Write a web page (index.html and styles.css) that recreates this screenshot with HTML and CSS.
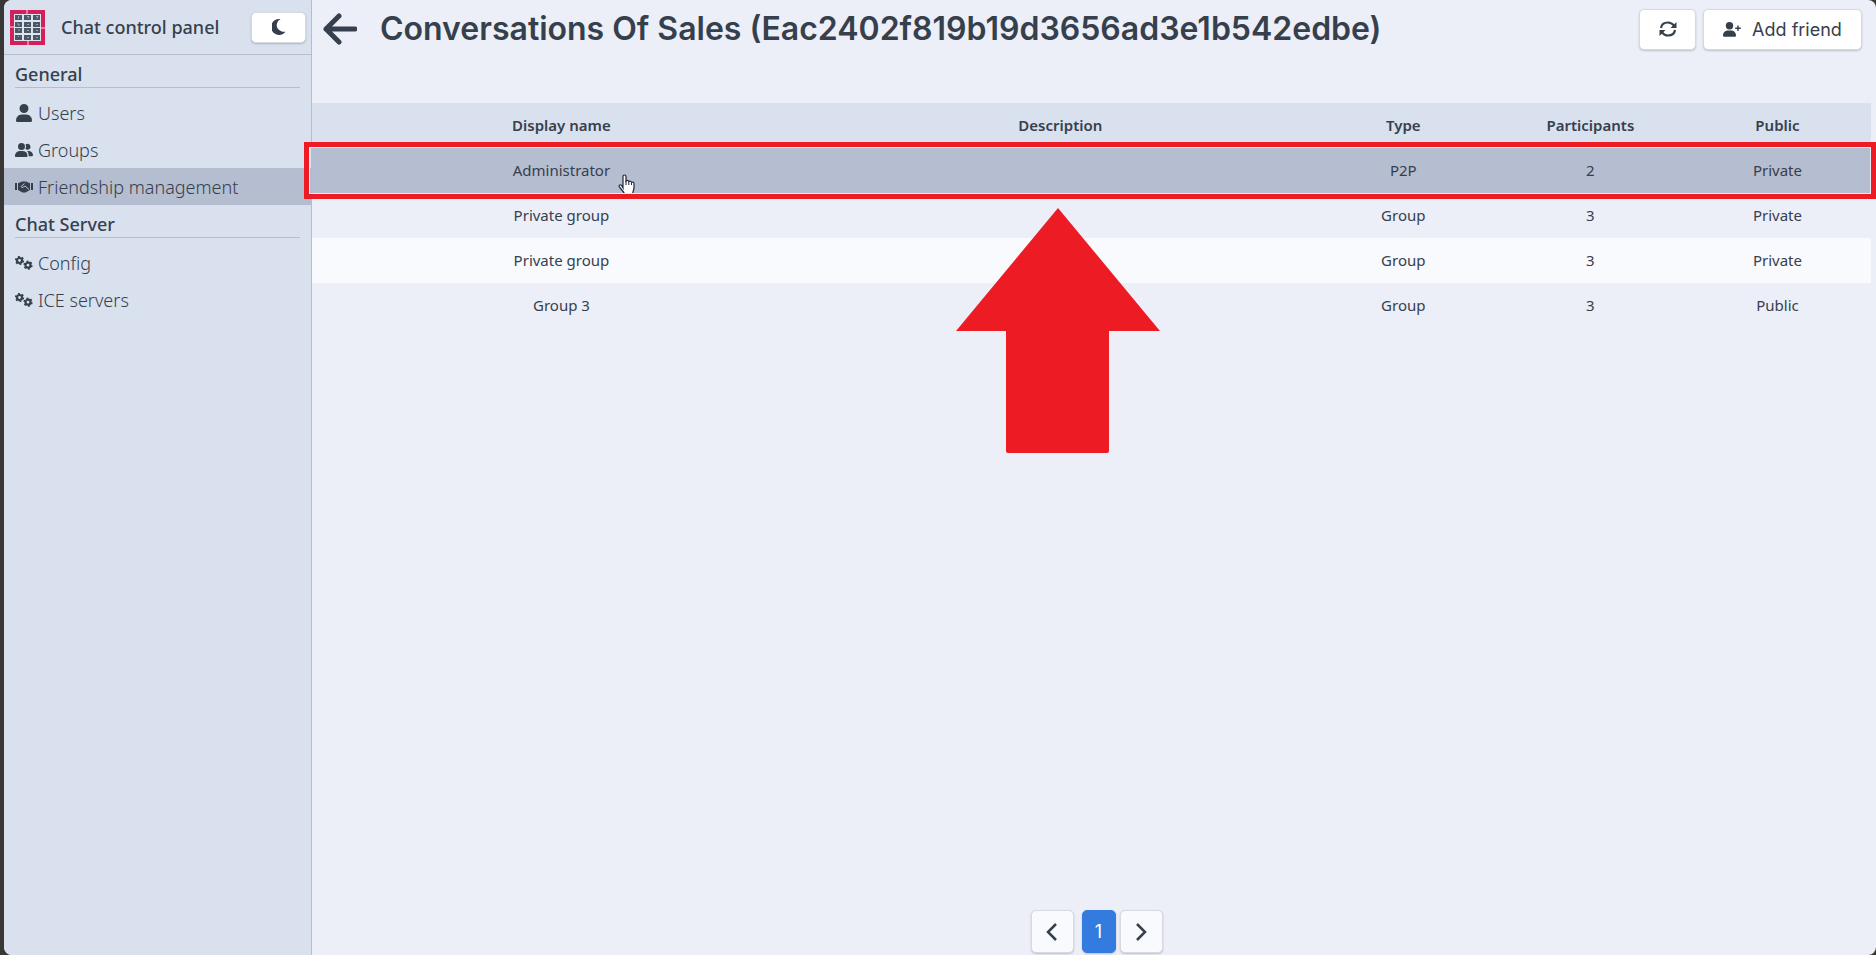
FILE: index.html
```
<!DOCTYPE html>
<html lang="en">
<head>
<meta charset="UTF-8">
<title>Chat control panel</title>
<link rel="stylesheet" href="styles.css">
</head>
<body>

<svg class="sprite" aria-hidden="true">
    <symbol id="gears" viewBox="0 0 18 14">
        <g fill="none" stroke="currentColor">
            <circle cx="4.5" cy="4.5" r="2.5" stroke-width="2.2"/>
            <circle cx="4.5" cy="4.5" r="3.8" stroke-width="1.6" stroke-dasharray="1.9 2.08"/>
            <circle cx="13" cy="9.2" r="2.5" stroke-width="2.2"/>
            <circle cx="13" cy="9.2" r="3.8" stroke-width="1.6" stroke-dasharray="1.9 2.08"/>
        </g>
    </symbol>
</svg>

<div class="app">
    <aside class="sidebar">
        <div class="brand">
            <svg class="logo" viewBox="0 0 35 35">
                <rect width="35" height="35" fill="#d3205d"/>
                <rect x="4" y="4" width="27" height="27" fill="#dfe3ec"/>
                <path d="M17 0v4M18 31v4M0 17h4M31 18h4" stroke="#f3dbe6" stroke-width="1"/>
                <g fill="#4b5867">
                    <rect x="5" y="5" width="7" height="5"/><rect x="14" y="5" width="7" height="5"/><rect x="23" y="5" width="7" height="5"/>
                    <rect x="5" y="12" width="7" height="5"/><rect x="14" y="12" width="7" height="5"/><rect x="23" y="12" width="7" height="5"/>
                    <rect x="5" y="18" width="7" height="5"/><rect x="14" y="18" width="7" height="5"/><rect x="23" y="18" width="7" height="5"/>
                    <rect x="5" y="25" width="7" height="5"/><rect x="14" y="25" width="7" height="5"/><rect x="23" y="25" width="7" height="5"/>
                </g>
                <path d="M8.5 6v3M17 6.500h2l-1 2M26 6.500h2l-1 2M8 13v2h2M17 14.500h2M26 14.500h2M8 20h2M17 20.500h2M26 20.500h2M8 26.500h1M17 27.500h2M26 27.500h2" stroke="#bcc5d2" stroke-width=".7" fill="none"/>
            </svg>
            <span class="brand-name">Chat control panel</span>
            <button class="btn theme-btn" aria-label="Toggle dark mode">
                <svg width="14" height="16" viewBox="0 0 14 16"><path fill="currentColor" d="M8 0A8 8 0 1 0 13.500 12.700C8 13.500 3.500 9 5 4.500 5.500 2.700 6.500 1.200 8.500.2z"/></svg>
            </button>
        </div>

        <nav>
            <h2>General</h2>
            <a class="item" href="#">
                <svg width="18" height="18" viewBox="0 0 18 18"><path fill="currentColor" d="M9 0a4.500 4.500 0 1 1 0 9 4.500 4.500 0 0 1 0-9zM7 10.500h4c4 0 6 3 6 6 0 .800-.500 1.500-1.300 1.500H2.300C1.500 18 1 17.300 1 16.500c0-3 2-6 6-6z"/></svg>
                Users
            </a>
            <a class="item" href="#">
                <svg width="18" height="14" viewBox="0 0 18 14"><path fill="currentColor" d="M6.500 0a3.500 3.500 0 1 1 0 7 3.500 3.500 0 0 1 0-7zM5 8h3c3 0 4.500 2.200 4.500 5 0 .600-.400 1-1 1H1c-.600 0-1-.400-1-1 0-2.800 2-5 5-5zM12.500.800a3 3 0 1 1-2.200 5c1-1.400 1-3.200.2-4.400.6-.4 1.300-.6 2-.6zM12 8h1.500c2.500 0 4.500 1.800 4.500 4.300 0 .5-.4.900-1 .900h-3.300c.100-2.200-.500-4-1.700-5.200z"/></svg>
                Groups
            </a>
            <a class="item active" href="#">
                <svg width="18" height="14" viewBox="0 0 18 14">
                    <path fill="currentColor" d="M0 3h2v7H0zM16 3h2v7h-2zM3 3.200L7 1.500h4l4 1.700V10l-4.500 2.500h-3L3 10z"/>
                    <path fill="none" stroke="#b5bdd0" stroke-width="1" d="M9.500 3.500L6 6.500l1 1.200L10 6l4 3.500"/>
                </svg>
                Friendship management
            </a>
            <h2>Chat Server</h2>
            <a class="item" href="#"><svg width="18" height="14"><use href="#gears"/></svg>Config</a>
            <a class="item" href="#"><svg width="18" height="14"><use href="#gears"/></svg>ICE servers</a>
        </nav>
    </aside>

    <main>
        <header>
            <a class="back" href="#" aria-label="Back">
                <svg width="34" height="32" viewBox="0 0 34 32"><path d="M32 16H3M16 3L3 16l13 13" fill="none" stroke="currentColor" stroke-width="5" stroke-linecap="round" stroke-linejoin="round"/></svg>
            </a>
            <h1>Conversations Of Sales (Eac2402f819b19d3656ad3e1b542edbe)</h1>
            <button class="btn refresh-btn" aria-label="Refresh">
                <svg width="18" height="16" viewBox="0 0 18 16"><path d="M2 7C2.500 3.500 5.500 1.500 9 1.500c2.500 0 4.500 1.200 6 3.200M16 9c-.500 3.500-3.500 5.500-7 5.500-2.500 0-4.500-1.200-6-3.200" fill="none" stroke="currentColor" stroke-width="2.200"/><path d="M17.500 1v6h-6zM.500 15V9h6z" fill="currentColor"/></svg>
            </button>
            <button class="btn add-btn">
                <svg width="18" height="15" viewBox="0 0 18 15"><path fill="currentColor" d="M6.500 0a3.700 3.700 0 1 1 0 7.400 3.700 3.700 0 0 1 0-7.400zM5 8.600h3c3 0 5 2.200 5 5 0 .800-.400 1.200-1 1.200H1c-.600 0-1-.400-1-1.200 0-2.800 2-5 5-5z"/><path d="M15 3.500v5.500M12.200 6.200h5.600" stroke="currentColor" stroke-width="1.400"/></svg>
                Add friend
            </button>
        </header>

        <div class="table-wrap">
            <table>
                <thead>
                    <tr><th class="wide">Display name</th><th class="wide">Description</th><th>Type</th><th>Participants</th><th>Public</th></tr>
                </thead>
                <tbody>
                    <tr class="selected"><td>Administrator</td><td></td><td>P2P</td><td>2</td><td>Private</td></tr>
                    <tr><td>Private group</td><td></td><td>Group</td><td>3</td><td>Private</td></tr>
                    <tr><td>Private group</td><td></td><td>Group</td><td>3</td><td>Private</td></tr>
                    <tr><td>Group 3</td><td></td><td>Group</td><td>3</td><td>Public</td></tr>
                </tbody>
            </table>
            <svg class="cursor" width="18" height="20" viewBox="0 0 18 20"><path d="M5 14V2.500C5 .500 8 .500 8 2.500V7c1-1 2.500-.500 2.800.500 1-.700 2.300-.300 2.700.800 1.200-.500 2.500 0 2.500 1.500v4c0 2-1 3-1.500 6.200h-8C6 17.500 2 14.500 1.200 12.500c-.500-1.500 1.300-2.300 2.300-1.200z" fill="#fff" stroke="#1f2633" stroke-width="1.200"/><path d="M8 7v4M10.800 8v3M13.500 9v2" stroke="#1f2633"/></svg>
            <div class="highlight"></div>
            <svg class="arrow" width="204" height="246" viewBox="0 0 204 246"><path d="M102 0L204 123H153V243q0 2-2 2H52q-2 0-2-2V123H0z" fill="#ed1c24"/></svg>
        </div>

        <div class="pagination">
            <button class="btn page prev" aria-label="Previous page"><svg width="12" height="20" viewBox="0 0 12 20"><path d="M10 2L2 10l8 8" fill="none" stroke="currentColor" stroke-width="2.500"/></svg></button>
            <button class="btn page current">1</button>
            <button class="btn page" aria-label="Next page"><svg width="12" height="20" viewBox="0 0 12 20"><path d="M2 2l8 8-8 8" fill="none" stroke="currentColor" stroke-width="2.500"/></svg></button>
        </div>
    </main>
</div>

</body>
</html>
```
FILE: styles.css
```
* {
    box-sizing: border-box;
}

body {
    margin: 0;
    background-color: #383735;
    color: #36404d;
    font-family: "Noto Sans", "Open Sans", sans-serif;
    font-size: 18px;
}

.sprite {
    position: absolute;
    width: 0;
    height: 0;
}

.app {
    display: flex;
    min-height: 100vh;
    margin-left: 4px;
    background-color: #eceff8;
    border-radius: 8px;
    overflow: hidden;
}

/* Sidebar */
.sidebar {
    width: 308px;
    flex-shrink: 0;
    background-color: #d8e1ed;
    border-right: 1px solid #b5bdce;
}

.brand {
    display: flex;
    align-items: center;
    height: 55px;
    padding: 0 5px 0 6px;
    border-bottom: 1px solid #b5bdce;
}

.logo {
    width: 35px;
    height: 35px;
}

.brand-name {
    flex: 1;
    margin-left: 16px;
    font-weight: 500;
}

h2 {
    height: 33px;
    margin: 0 11px 6px;
    border-bottom: 1px solid #b5bdce;
    font-size: 18px;
    font-weight: 500;
    line-height: 38px;
}

.item {
    display: flex;
    align-items: center;
    gap: 5px;
    height: 37px;
    padding: 0 11px;
    color: inherit;
    font-weight: 300;
    text-decoration: none;
}

.item.active {
    background-color: #b5bdd0;
}

/* Buttons */
.btn {
    display: flex;
    align-items: center;
    justify-content: center;
    padding: 0;
    background-color: #fff;
    color: #36404d;
    border: 1px solid #d5dae3;
    border-radius: 5px;
    box-shadow: 0 1px 2px rgba(0, 0, 0, 0.2);
    font-family: Inter, sans-serif;
    font-size: 18px;
    cursor: pointer;
}

.theme-btn {
    width: 55px;
    height: 31px;
}

.refresh-btn {
    width: 57px;
    height: 41px;
}

.add-btn {
    width: 159px;
    height: 41px;
    gap: 11px;
    margin-left: 7px;
}

/* Main area */
main {
    display: flex;
    flex: 1;
    flex-direction: column;
    min-width: 0;
}

header {
    display: flex;
    align-items: center;
    height: 58px;
    padding: 0 14px 0 11px;
}

.back {
    display: flex;
    color: inherit;
}

h1 {
    flex: 1;
    margin: 0 0 0 23px;
    padding-bottom: 2px;
    font-family: Inter, sans-serif;
    font-size: 32px;
    font-weight: 600;
    white-space: nowrap;
}

.table-wrap {
    position: relative;
    margin-top: 45px;
}

table {
    width: calc(100% - 5px);
    border-collapse: collapse;
    table-layout: fixed;
    font-size: 15px;
    text-align: center;
}

th, td {
    width: 12%;
    height: 45px;
    padding: 0 0 2px;
}

th {
    background-color: #d8e1ed;
    font-weight: 600;
}

th.wide {
    width: 32%;
}

tbody tr:nth-child(odd) {
    background-color: #f8fafd;
}

tbody tr.selected {
    background-color: #b5bdd0;
}

/* Marks drawn over the table */
.highlight {
    position: absolute;
    top: 39px;
    left: -8px;
    right: 0;
    height: 57px;
    border: 5px solid #ed1c24;
    box-shadow: inset 0 0 0 1px #e6e8f2;
}

.cursor {
    position: absolute;
    top: 71px;
    left: 306px;
}

.arrow {
    position: absolute;
    top: 105px;
    left: calc(50% - 138px);
}

.pagination {
    display: flex;
    justify-content: center;
    gap: 4px;
    margin-top: auto;
    padding: 0 0 2px 5px;
}

.page {
    width: 43px;
    height: 43px;
    background-color: #f9fafd;
}

.page.prev {
    margin-right: 4px;
}

.page.current {
    width: 34px;
    background-color: #347bdf;
    color: #fff;
    border-color: #347bdf;
}
```
